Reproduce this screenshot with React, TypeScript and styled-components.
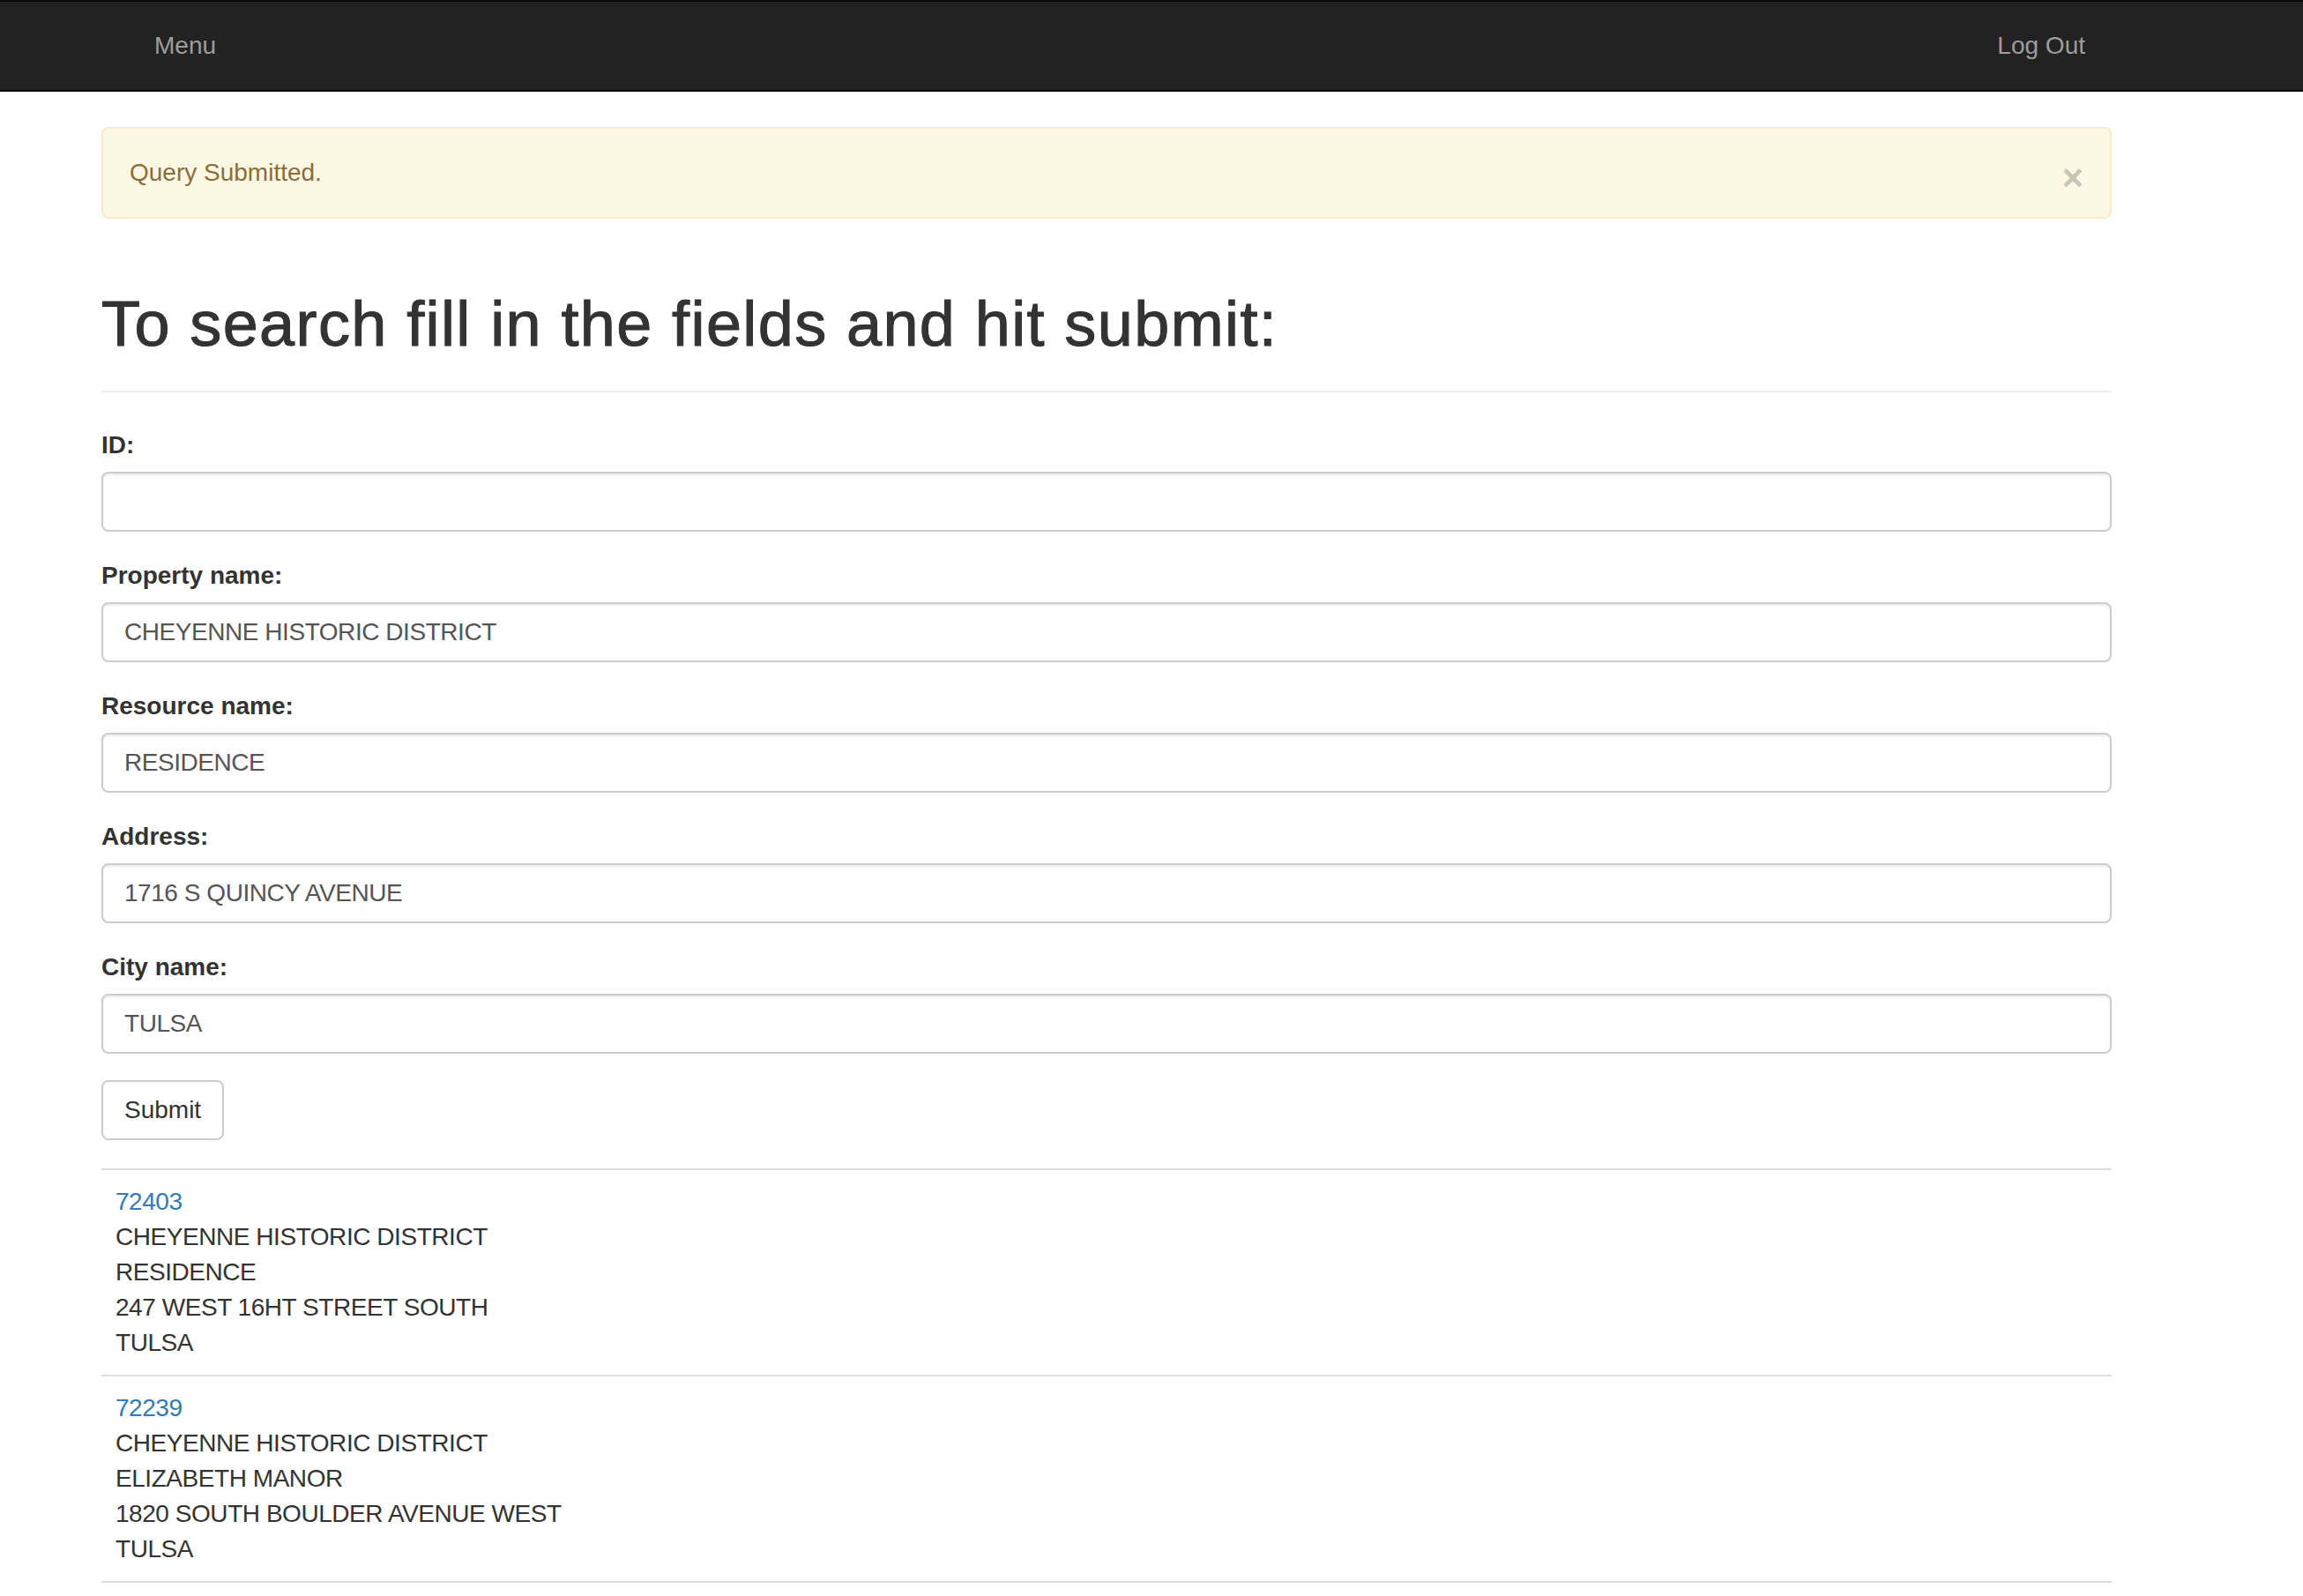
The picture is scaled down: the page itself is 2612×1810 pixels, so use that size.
import React from "react";
import styled, { createGlobalStyle } from "styled-components";

const GlobalStyle = createGlobalStyle`
  html, body {
    margin: 0;
    padding: 0;
    background: #fff;
  }
  body {
    font-family: "Liberation Sans", Helvetica, Arial, sans-serif;
    font-size: 28px;
    line-height: 40px;
    color: #333;
  }
  * { box-sizing: border-box; }
`;

const Navbar = styled.nav`
  display: flex;
  align-items: center;
  justify-content: space-between;
  height: 104px;
  background: #222;
  border-top: 2px solid #080808;
  border-bottom: 2px solid #080808;
  padding: 0 247px 0 175px;
  margin-bottom: 40px;
`;

const NavLink = styled.a`
  color: #9d9d9d;
  font-size: 28px;
  line-height: 40px;
  text-decoration: none;
`;

const Container = styled.main`
  padding: 0 217px 0 115px;
`;

const Alert = styled.div`
  display: flex;
  justify-content: space-between;
  align-items: flex-start;
  background: #fcf8e3;
  border: 2px solid #faebcc;
  border-radius: 8px;
  color: #8a6d3b;
  padding: 30px 70px 30px 30px;
  margin-bottom: 80px;
`;

const CloseButton = styled.button`
  background: none;
  border: 0;
  padding: 0;
  margin: 6px -40px -6px 0;
  height: 40px;
  font-family: "Liberation Sans", Helvetica, Arial, sans-serif;
  font-size: 42px;
  font-weight: bold;
  line-height: 40px;
  color: #000;
  opacity: 0.2;
  text-shadow: 0 2px 0 #fff;
  cursor: pointer;
`;

const PageHeader = styled.div`
  padding-bottom: 16px;
  border-bottom: 2px solid #eee;
  margin-bottom: 40px;
`;

const Title = styled.h1`
  margin: 0 0 20px;
  font-size: 72px;
  line-height: 79px;
  font-weight: 500;
  letter-spacing: 1.4px;
  -webkit-text-stroke: 1.1px #333;
  color: #333;
`;

const FormGroup = styled.div`
  margin-bottom: 30px;
`;

const Label = styled.label`
  display: inline-block;
  margin-bottom: 10px;
  font-weight: bold;
`;

const Input = styled.input`
  display: block;
  width: 100%;
  height: 68px;
  padding: 12px 24px;
  font-family: "Liberation Sans", Helvetica, Arial, sans-serif;
  font-size: 28px;
  line-height: 40px;
  letter-spacing: -0.45px;
  color: #555;
  background: #fff;
  border: 2px solid #ccc;
  border-radius: 8px;
  box-shadow: inset 0 2px 2px rgba(0, 0, 0, 0.075);
  outline: none;
`;

const SubmitButton = styled.button`
  display: inline-block;
  height: 68px;
  padding: 12px 24px;
  font-family: "Liberation Sans", Helvetica, Arial, sans-serif;
  font-size: 28px;
  line-height: 40px;
  color: #333;
  background: #fff;
  border: 2px solid #ccc;
  border-radius: 8px;
  cursor: pointer;
`;

const Results = styled.div`
  margin-top: 32px;
  border-bottom: 2px solid #ddd;
`;

const ResultRow = styled.div`
  border-top: 2px solid #ddd;
  padding: 16px;
  display: flex;
  flex-direction: column;
  letter-spacing: -0.45px;
`;

const ResultLink = styled.a`
  color: #337ab7;
  text-decoration: none;
`;

const fields = [
  { id: "id", label: "ID:", value: "" },
  { id: "property", label: "Property name:", value: "CHEYENNE HISTORIC DISTRICT" },
  { id: "resource", label: "Resource name:", value: "RESIDENCE" },
  { id: "address", label: "Address:", value: "1716 S QUINCY AVENUE" },
  { id: "city", label: "City name:", value: "TULSA" },
];

const results = [
  {
    id: "72403",
    lines: ["CHEYENNE HISTORIC DISTRICT", "RESIDENCE", "247 WEST 16HT STREET SOUTH", "TULSA"],
  },
  {
    id: "72239",
    lines: ["CHEYENNE HISTORIC DISTRICT", "ELIZABETH MANOR", "1820 SOUTH BOULDER AVENUE WEST", "TULSA"],
  },
];

export default function App() {
  return (
    <>
      <GlobalStyle />
      <Navbar>
        <NavLink href="#">Menu</NavLink>
        <NavLink href="#">Log Out</NavLink>
      </Navbar>
      <Container>
        <Alert>
          <span>Query Submitted.</span>
          <CloseButton aria-label="Close">×</CloseButton>
        </Alert>
        <PageHeader>
          <Title>To search fill in the fields and hit submit:</Title>
        </PageHeader>
        <form onSubmit={(e) => e.preventDefault()}>
          {fields.map((f) => (
            <FormGroup key={f.id}>
              <Label htmlFor={f.id}>{f.label}</Label>
              <Input id={f.id} defaultValue={f.value} />
            </FormGroup>
          ))}
          <SubmitButton type="submit">Submit</SubmitButton>
        </form>
        <Results>
          {results.map((r) => (
            <ResultRow key={r.id}>
              <ResultLink href="#">{r.id}</ResultLink>
              {r.lines.map((l, i) => (
                <span key={i}>{l}</span>
              ))}
            </ResultRow>
          ))}
        </Results>
      </Container>
    </>
  );
}
